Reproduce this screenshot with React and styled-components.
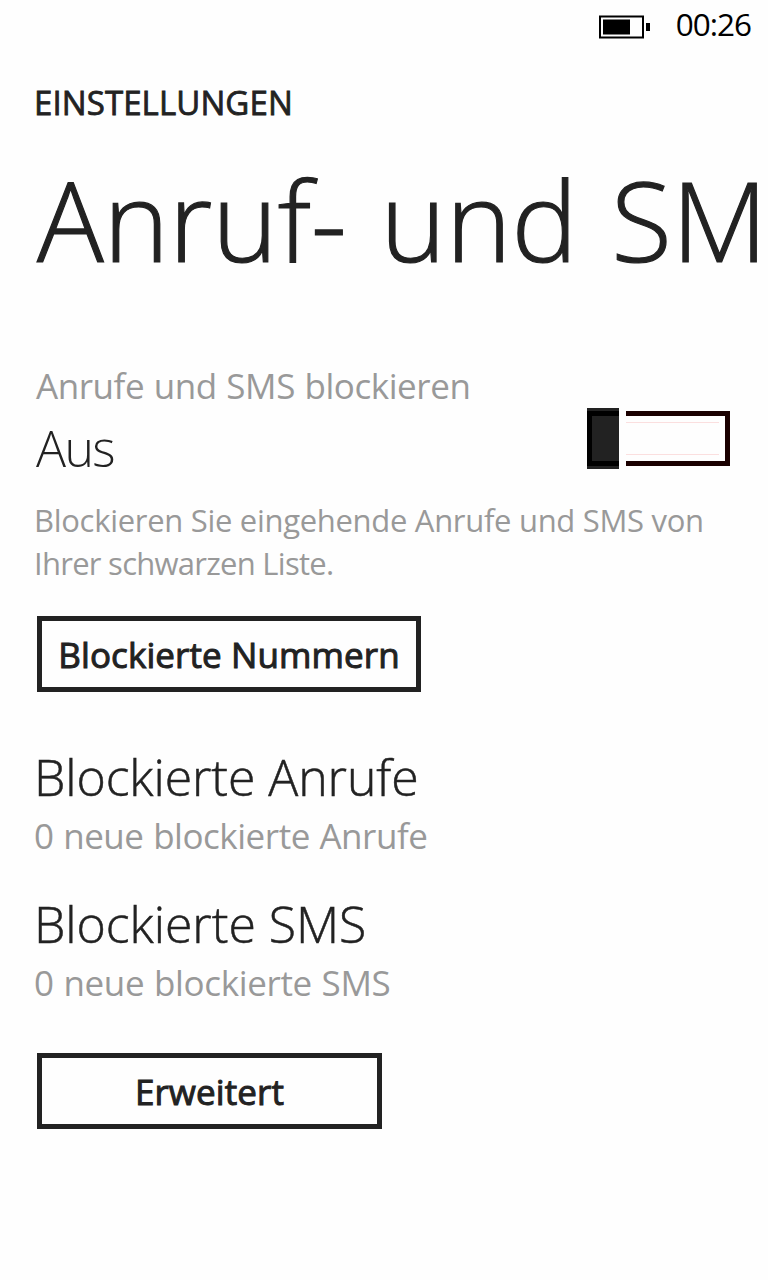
import React from 'react';
import styled, { createGlobalStyle } from 'styled-components';

const GlobalStyle = createGlobalStyle`
  *, *::before, *::after { box-sizing: border-box; }
  body { margin: 0; background: #fefefe; }
`;

const Screen = styled.main`
  width: 768px;
  height: 1280px;
  overflow: hidden;
  background: #fefefe;
  color: #222;
  font-family: 'Open Sans', 'Noto Sans', sans-serif;
`;

const StatusBar = styled.header`
  display: flex;
  align-items: flex-start;
  justify-content: flex-end;
  height: 81px;
  padding: 4px 17px 0 0;
  color: #000;
`;

const Battery = styled.svg`
  display: block;
  width: 52px;
  height: 24px;
  margin: 11px 25px 0 0;
`;

const Clock = styled.time`
  font-size: 31.5px;
  line-height: 40px;
  letter-spacing: ${(p) => p.$spacing}px;
  white-space: nowrap;
`;

const AppName = styled.div`
  padding-left: 34px;
  font-size: 33px;
  line-height: 44px;
  letter-spacing: ${(p) => p.$spacing}px;
  -webkit-text-stroke: 0.8px currentColor;
`;

const Title = styled.h1`
  margin: 24px 0 74px;
  padding-left: 37px;
  white-space: nowrap;
  font-size: 111px;
  font-weight: 300;
  line-height: 140px;
  letter-spacing: ${(p) => p.$spacing}px;
  word-spacing: 5px;
  -webkit-text-stroke: 1.2px currentColor;
`;

const Content = styled.section`
  display: flex;
  flex-direction: column;
  align-items: flex-start;
  padding-left: 34px;
`;

const Caption = styled.div`
  color: #999;
  font-size: 35px;
  line-height: 44px;
  letter-spacing: ${(p) => p.$spacing}px;
  word-spacing: 1px;
  white-space: nowrap;
`;

const Value = styled.div`
  font-size: 50px;
  font-weight: 300;
  line-height: 60px;
  letter-spacing: ${(p) => p.$spacing}px;
  white-space: nowrap;
  -webkit-text-stroke: ${(p) => p.$stroke ?? 0.5}px currentColor;
`;

const ToggleRow = styled.div`
  display: flex;
  justify-content: space-between;
  width: 696px;
`;

const ToggleText = styled.div`
  display: flex;
  flex-direction: column;
  gap: 10px;
  padding: 1px 0 0 2px;
`;

const Switch = styled.div`
  display: flex;
  align-items: center;
  gap: 7px;
  height: 61px;
  margin-top: 45px;
`;

const Thumb = styled.div`
  width: 32px;
  height: 61px;
  padding: 3px 0;
  background: #222;

  &::before {
    content: '';
    display: block;
    height: 55px;
    border: solid #000;
    border-width: 5px 0 5px 5px;
  }
`;

const Track = styled.div`
  width: 104px;
  height: 55px;
  padding: 6px 6px 6px 0;
  border: solid #1a0000;
  border-width: 5px 5px 5px 0;

  &::before {
    content: '';
    display: block;
    height: 33px;
    border: solid #fbdfdf;
    border-width: 1px 0;
  }
`;

const Description = styled.p`
  margin: 21px 0 31px;
  color: #999;
  font-size: 31px;
  line-height: 43px;
  white-space: nowrap;
`;

const Line = styled.span`
  display: block;
  letter-spacing: ${(p) => p.$spacing}px;
`;

const Button = styled.button`
  width: ${(p) => p.$width}px;
  height: 76px;
  margin: 0 0 0 3px;
  padding: 1px 0 0;
  border: 5px solid #222;
  border-radius: 0;
  background: transparent;
  color: #222;
  font: 400 35px/44px 'Open Sans', 'Noto Sans', sans-serif;
  letter-spacing: ${(p) => p.$spacing}px;
  white-space: nowrap;
  -webkit-text-stroke: 1px currentColor;
`;

const Links = styled.div`
  display: flex;
  flex-direction: column;
  gap: 36px;
  margin: 55px 0 48px;
`;

const Entry = styled.div`
  display: flex;
  flex-direction: column;
  gap: 7px;
`;

export default function App() {
  return (
    <Screen>
      <GlobalStyle />
      <StatusBar>
        <Battery viewBox="0 0 52 24" aria-label="Akku">
          <rect x="1" y="1.5" width="43" height="21" fill="none" stroke="#000" strokeWidth="2" />
          <rect x="4" y="4.5" width="27" height="15" fill="#000" />
          <rect x="47" y="8" width="4" height="8" fill="#000" />
        </Battery>
        <Clock $spacing={-1}>00:26</Clock>
      </StatusBar>
      <AppName $spacing={0.1}>EINSTELLUNGEN</AppName>
      <Title $spacing={-0.05}>Anruf- und SM</Title>
      <Content>
        <ToggleRow>
          <ToggleText>
            <Caption $spacing={-0.45}>Anrufe und SMS blockieren</Caption>
            <Value $stroke={0} $spacing={-1.6}>Aus</Value>
          </ToggleText>
          <Switch role="switch" aria-checked="false">
            <Thumb />
            <Track />
          </Switch>
        </ToggleRow>
        <Description>
          <Line $spacing={-0.3}>Blockieren Sie eingehende Anrufe und SMS von</Line>
          <Line $spacing={-0.73}>Ihrer schwarzen Liste.</Line>
        </Description>
        <Button $width={384} $spacing={0.1}>Blockierte Nummern</Button>
        <Links>
          <Entry>
            <Value $spacing={-0.1}>Blockierte Anrufe</Value>
            <Caption $spacing={-0.47}>0 neue blockierte Anrufe</Caption>
          </Entry>
          <Entry>
            <Value $spacing={-0.05}>Blockierte SMS</Value>
            <Caption $spacing={-0.35}>0 neue blockierte SMS</Caption>
          </Entry>
        </Links>
        <Button $width={345} $spacing={0.1}>Erweitert</Button>
      </Content>
    </Screen>
  );
}
